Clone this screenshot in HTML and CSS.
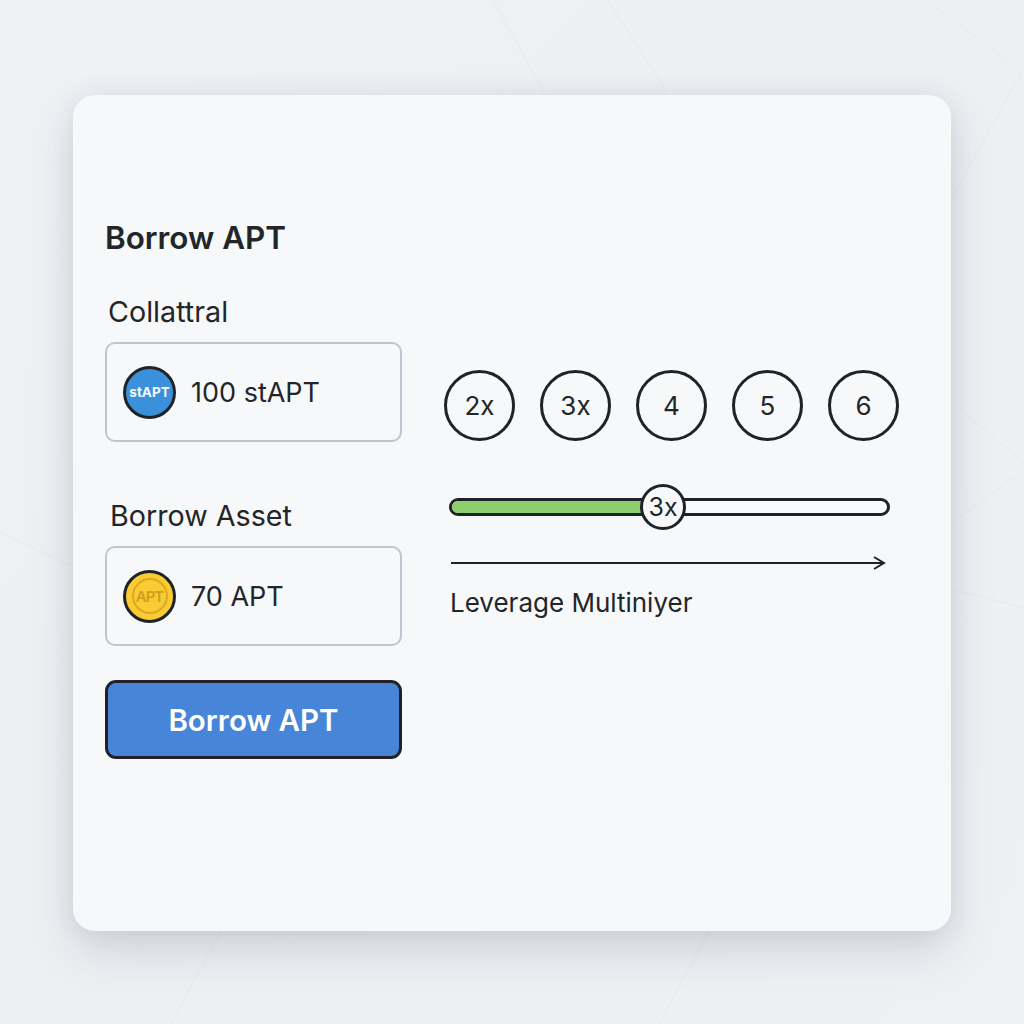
FILE: index.html
```html
<!DOCTYPE html>
<html lang="en">
<head>
    <meta charset="UTF-8">
    <title>Borrow APT</title>
    <link rel="stylesheet" href="styles.css">
</head>
<body>
    <svg class="bg-lines" viewBox="0 0 1024 1024" fill="none">
        <path d="M493 0L545 94M608 0L668 94M925 0L1022 71L951 200M221 931L171 1024M709 931L659 1024M951 402L1024 463M951 524L1024 470M951 589L1024 608M0 532L73 567"/>
    </svg>

    <div class="card">
        <div class="form-col">
            <h1 class="title">Borrow APT</h1>

            <label class="field-label">Collattral</label>
            <div class="field">
                <div class="token token-blue">stAPT</div>
                <span>100 stAPT</span>
            </div>

            <label class="field-label label-borrow">Borrow Asset</label>
            <div class="field">
                <div class="token token-gold"><span class="token-ring">APT</span></div>
                <span>70 APT</span>
            </div>

            <button class="borrow-btn">Borrow APT</button>
        </div>

        <div class="leverage-col">
            <div class="steps">
                <div class="step">2x</div>
                <div class="step">3x</div>
                <div class="step">4</div>
                <div class="step">5</div>
                <div class="step">6</div>
            </div>

            <div class="slider">
                <div class="slider-fill"></div>
                <div class="slider-thumb">3x</div>
            </div>

            <svg class="arrow" width="437" height="16" viewBox="0 0 437 16" fill="none">
                <path d="M0 8H433M423 2L433 8L423 14"/>
            </svg>

            <div class="leverage-label">Leverage Multiniyer</div>
        </div>
    </div>
</body>
</html>
```

FILE: styles.css
```css
* {
    box-sizing: border-box;
}
body {
    font-family: Inter, "Liberation Sans", sans-serif;
    background: linear-gradient(135deg, #eff2f5 0%, #edf0f3 50%, #eef1f4 100%);
    color: #222629;
    margin: 0;
    height: 1024px;
    padding: 95px 73px;
    overflow: hidden;
}
.bg-lines {
    position: absolute;
    top: 0;
    left: 0;
    width: 1024px;
    height: 1024px;
}
.bg-lines path {
    stroke: #e6e9ec;
    stroke-width: 1;
}
.card {
    position: relative;
    display: flex;
    gap: 42px;
    width: 878px;
    height: 836px;
    padding: 125px 32px 0;
    background: #f6f8f9;
    border-radius: 22px;
    box-shadow: 0 20px 46px rgba(60, 70, 90, 0.17), 0 0 24px rgba(60, 70, 90, 0.08);
}
.form-col {
    width: 297px;
    flex-shrink: 0;
}
.title {
    margin: 0 0 40px;
    font-size: 31.4px;
    line-height: 36px;
    font-weight: 600;
}
.field-label {
    display: block;
    margin: 0 0 14px 3px;
    font-size: 28.7px;
    line-height: 32px;
}
.label-borrow {
    margin: 58px 0 14px 5px;
}
.field {
    display: flex;
    align-items: center;
    gap: 15px;
    height: 100px;
    padding: 0 16px;
    border: 2px solid #bec6cf;
    border-radius: 10px;
    font-size: 27px;
}
.token {
    display: flex;
    align-items: center;
    justify-content: center;
    width: 53px;
    height: 53px;
    flex-shrink: 0;
    border: 3px solid #1f2328;
    border-radius: 50%;
}
.token-blue {
    background: #3a90da;
    color: #f5f9fc;
    font-size: 13.5px;
    font-weight: 700;
}
.token-gold {
    background: #fbcb33;
}
.token-ring {
    display: flex;
    align-items: center;
    justify-content: center;
    width: 36px;
    height: 36px;
    border: 2.5px solid #dcaa20;
    border-radius: 50%;
    color: #cf9f1d;
    font-size: 15px;
    font-weight: 600;
    letter-spacing: -1px;
}
.borrow-btn {
    display: block;
    width: 100%;
    height: 79px;
    margin-top: 34px;
    background: #4785d9;
    border: 3px solid #1f2328;
    border-radius: 11px;
    color: #fff;
    font-family: inherit;
    font-size: 29.5px;
    font-weight: 600;
}
.leverage-col {
    flex: 1;
    padding-top: 150px;
}
.steps {
    display: flex;
    gap: 25px;
}
.step {
    display: flex;
    align-items: center;
    justify-content: center;
    width: 71px;
    height: 71px;
    border: 3px solid #1f2328;
    border-radius: 50%;
    font-size: 26px;
}
.slider {
    position: relative;
    width: 441px;
    height: 18px;
    margin: 57px 0 0 5px;
    background: #f8f9fa;
    border: 3px solid #1f2328;
    border-radius: 9px;
}
.slider-fill {
    width: 50%;
    height: 100%;
    background: #8ccf6c;
    border-radius: 6px 0 0 6px;
}
.slider-thumb {
    position: absolute;
    top: -17px;
    left: 188px;
    display: flex;
    align-items: center;
    justify-content: center;
    width: 46px;
    height: 46px;
    background: #f6f8f9;
    border: 3px solid #1f2328;
    border-radius: 50%;
    font-size: 25px;
}
.arrow {
    display: block;
    margin: 39px 0 0 7px;
}
.arrow path {
    stroke: #1f2328;
    stroke-width: 2;
}
.leverage-label {
    margin: 16px 0 0 6px;
    font-size: 26px;
    line-height: 32px;
}
```
